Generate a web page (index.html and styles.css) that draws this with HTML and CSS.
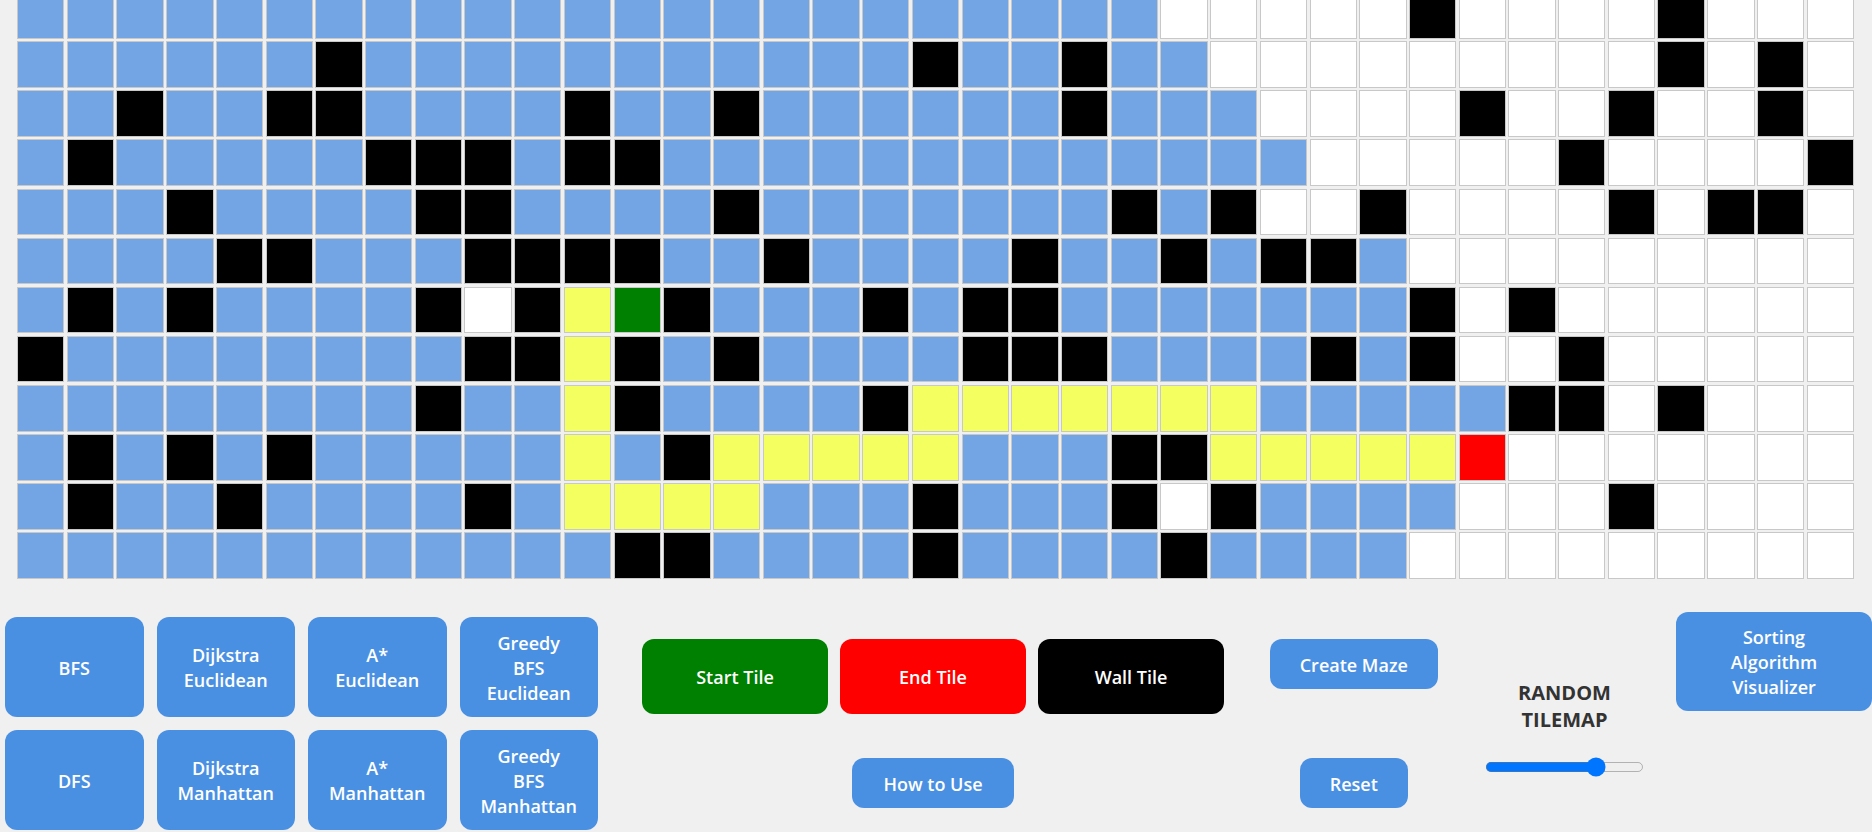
FILE: index.html
```html
<!DOCTYPE html>
<html lang="en">
<head>
<meta charset="utf-8">
<title>Pathfinding Visualizer</title>
<link rel="stylesheet" href="styles.css">
</head>
<body>
<div class="board" id="board"></div>
<div class="controls">
  <div class="algos">
    <button class="btn algo">BFS</button>
    <button class="btn algo">Dijkstra<br>Euclidean</button>
    <button class="btn algo">A*<br>Euclidean</button>
    <button class="btn algo">Greedy<br>BFS<br>Euclidean</button>
    <button class="btn algo">DFS</button>
    <button class="btn algo">Dijkstra<br>Manhattan</button>
    <button class="btn algo">A*<br>Manhattan</button>
    <button class="btn algo">Greedy<br>BFS<br>Manhattan</button>
  </div>
  <div class="tiles">
    <div class="tile-row">
      <button class="btn tile start-btn">Start Tile</button>
      <button class="btn tile end-btn">End Tile</button>
      <button class="btn tile wall-btn">Wall Tile</button>
    </div>
    <button class="btn small how">How to Use</button>
  </div>
  <div class="actions">
    <button class="btn small maze">Create Maze</button>
    <button class="btn small reset">Reset</button>
  </div>
  <div class="random">
    <h3 class="random-title">RANDOM<br>TILEMAP</h3>
    <input type="range" class="density" min="0" max="100" value="73">
  </div>
  <button class="btn sorting">Sorting<br>Algorithm<br>Visualizer</button>
</div>
<script src="script.js"></script>
</body>
</html>
```

FILE: styles.css
```css
* {
  box-sizing: border-box;
}

html,
body {
  margin: 0;
}

body {
  background: #f0f0f0;
  font-family: "Open Sans", "Liberation Sans", sans-serif;
  width: 1872px;
  height: 832px;
  overflow: hidden;
  display: flow-root;
}

.board {
  display: grid;
  grid-template-columns: repeat(37, 1fr);
  grid-auto-rows: 46.7px;
  column-gap: 2.35px;
  row-gap: 2.4px;
  width: 1837px;
  margin: -7.8px 0 0 17px;
}

.cell {
  border: 1px solid #c8c8c8;
  background: #ffffff;
}

.cell.visited { background: #73a5e4; }
.cell.wall { background: #000000; }
.cell.path { background: #f4ff60; }
.cell.start { background: #008000; }
.cell.end { background: #ff0000; }

.controls {
  display: flex;
  align-items: flex-start;
  padding-left: 5px;
  margin-top: 33px;
}

.btn {
  border: none;
  margin: 0;
  padding: 3px 0 0;
  color: #ffffff;
  background: #4a90e2;
  font-family: "Open Sans", "Liberation Sans", sans-serif;
  font-weight: 600;
  font-size: 18px;
  line-height: 25px;
  border-radius: 12px;
  text-align: center;
  cursor: pointer;
}

.algos {
  display: grid;
  grid-template-columns: repeat(4, 138.5px);
  grid-auto-rows: 100px;
  gap: 13px;
  margin-top: 5px;
}

.tiles {
  display: flex;
  flex-direction: column;
  align-items: center;
  gap: 44px;
  margin: 27px 0 0 44px;
}

.tile-row {
  display: flex;
  gap: 12px;
}

.tile {
  width: 186px;
  height: 75px;
}

.start-btn { background: #008000; }
.end-btn { background: #ff0000; }
.wall-btn { background: #000000; }

.small {
  height: 50px;
}

.how { width: 162px; }

.actions {
  display: flex;
  flex-direction: column;
  align-items: center;
  gap: 69px;
  margin: 27px 0 0 46px;
}

.maze { width: 167.6px; }
.reset { width: 108px; }

.random {
  width: 159px;
  display: flex;
  flex-direction: column;
  align-items: center;
  margin: 67.5px 0 0 47.4px;
}

.random-title {
  margin: 0;
  color: #333333;
  font-family: "Open Sans", "Liberation Sans", sans-serif;
  font-weight: 700;
  font-size: 20px;
  line-height: 27px;
  text-align: center;
}

.density {
  zoom: 1.25;
  width: 127px;
  margin: 19px 0 0;
}

.sorting {
  width: 196px;
  height: 99px;
  margin-left: 32px;
}
```

FILE: script.js
```js
const rows = [
  "BBBBBBBBBBBBBBBBBBBBBBBWWWWWXWWWWXWWW",
  "BBBBBBXBBBBBBBBBBBXBBXBBWWWWWWWWWXWXW",
  "BBXBBXXBBBBXBBXBBBBBBXBBBWWWWXWWXWWXW",
  "BXBBBBBXXXBXXBBBBBBBBBBBBBWWWWWXWWWWX",
  "BBBXBBBBXXBBBBXBBBBBBBXBXWWXWWWWXWXXW",
  "BBBBXXBBBXXXXBBXBBBBXBBXBXXBWWWWWWWWW",
  "BXBXBBBBXWXYSXBBBXBXXBBBBBBBXWXWWWWWW",
  "XBBBBBBBBXXYXBXBBBBXXXBBBBXBXWWXWWWWW",
  "BBBBBBBBXBBYXBBBBXYYYYYYYBBBBBXXWXWWW",
  "BXBXBXBBBBBYBXYYYYYBBBXXYYYYYEWWWWWWW",
  "BXBBXBBBBXBYYYYBBBXBBBXWXBBBBWWWXWWWW",
  "BBBBBBBBBBBBXXBBBBXBBBBXBBBBWWWWWWWWW"
];

const kinds = { B: "visited", W: "empty", X: "wall", Y: "path", S: "start", E: "end" };
const board = document.getElementById("board");

rows.forEach(function (row) {
  for (const ch of row) {
    const cell = document.createElement("div");
    cell.className = "cell " + kinds[ch];
    board.appendChild(cell);
  }
});
```
